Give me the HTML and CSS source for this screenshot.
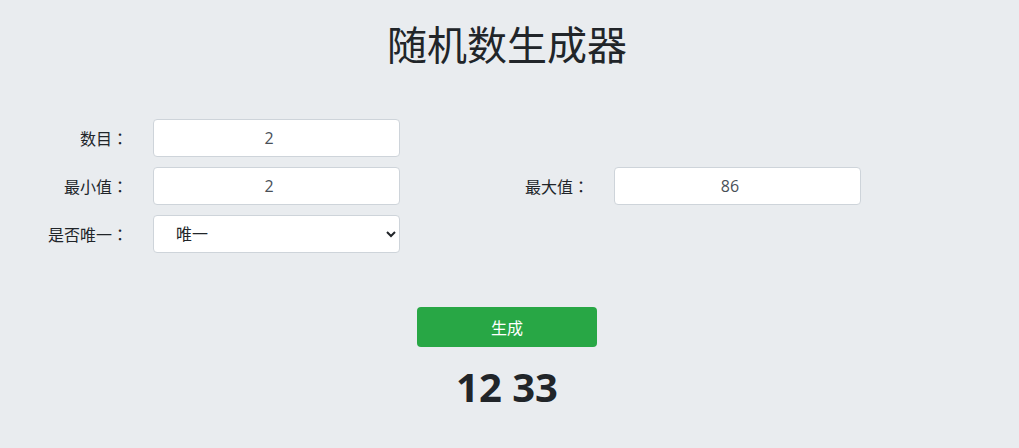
FILE: index.html
```html
<!DOCTYPE html>
<html lang="zh">
<head>
<meta charset="utf-8">
<title>随机数生成器</title>
<link rel="stylesheet" href="styles.css">
</head>
<body>
<main class="page">
  <h1 class="title">随机数生成器</h1>
  <form class="form">
    <label class="label">数目<span class="colon">：</span></label>
    <input class="field" type="number" value="2">
    <span></span><span></span>
    <label class="label">最小值<span class="colon">：</span></label>
    <input class="field" type="number" value="2">
    <label class="label">最大值<span class="colon">：</span></label>
    <input class="field" type="number" value="86">
    <label class="label">是否唯一<span class="colon">：</span></label>
    <select class="field select">
      <option>唯一</option>
      <option>不唯一</option>
    </select>
  </form>
  <div class="actions">
    <button class="btn" type="button">生成</button>
  </div>
  <div class="result">12 33</div>
</main>
</body>
</html>
```
FILE: styles.css
```css
html, body {
  margin: 0;
  padding: 0;
  background: #e9ecef;
}
body {
  font-family: "Open Sans", "Noto Sans CJK SC", sans-serif;
  color: #212529;
  font-size: 16px;
}
.page {
  width: 1014px;
  padding-top: 17px;
}
.title {
  margin: 0;
  text-align: center;
  font-size: 40px;
  font-weight: 400;
  line-height: 56px;
}
.form {
  margin-top: 46px;
  display: grid;
  grid-template-columns: 128px 247px 164px 247px;
  column-gap: 25px;
  row-gap: 10px;
  align-items: center;
}
.label {
  text-align: right;
  font-size: 16px;
  line-height: 24px;
}
.colon {
  font-family: "Noto Sans CJK TC", sans-serif;
  font-feature-settings: "locl" 0;
}
.field {
  box-sizing: border-box;
  height: 38px;
  width: 247px;
  margin: 0;
  border: 1px solid #ced4da;
  border-radius: 4px;
  background: #fff;
  color: #495057;
  font-family: "Open Sans", "Noto Sans CJK SC", sans-serif;
  font-size: 16px;
  text-align: center;
  padding: 6px 12px;
}
.select {
  text-align: left;
  padding-left: 18px;
  padding-right: 8px;
  color: #212529;
}
.actions {
  display: flex;
  justify-content: center;
  margin-top: 54px;
}
.btn {
  width: 180px;
  height: 40px;
  border: none;
  border-radius: 4px;
  background: #28a745;
  color: #fff;
  font-family: "Open Sans", "Noto Sans CJK SC", sans-serif;
  font-size: 16px;
}
.result {
  text-align: center;
  margin-top: 16px;
  font-size: 40px;
  font-weight: 700;
  line-height: 48px;
}
```
